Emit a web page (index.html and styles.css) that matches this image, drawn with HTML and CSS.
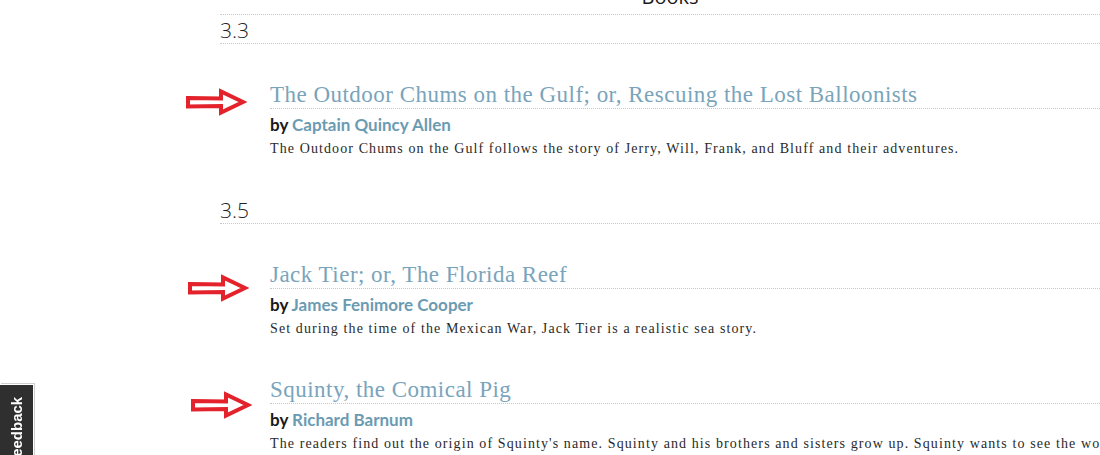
FILE: index.html
```html
<!DOCTYPE html>
<html lang="en">
<head>
<meta charset="utf-8">
<title>Books</title>
<link rel="stylesheet" href="styles.css">
</head>
<body>
<div class="main">
  <div class="page-title"><span>Books</span></div>

  <h2 class="section">3.3</h2>
  <div class="entry">
    <svg class="arrow arrow-a" width="62" height="28" viewBox="0 0 62 28"><path d="M3 10 L36 10.5 L36 3.5 L58 14 L36 24.5 L36 18 L3 18.5 Z" fill="#fff" stroke="#e3222b" stroke-width="4" stroke-linejoin="miter"/></svg>
    <h3 class="title">The Outdoor Chums on the Gulf; or, Rescuing the Lost Balloonists</h3>
    <div class="author">by <span class="name">Captain Quincy Allen</span></div>
    <p class="desc">The Outdoor Chums on the Gulf follows the story of Jerry, Will, Frank, and Bluff and their adventures.</p>
  </div>

  <h2 class="section">3.5</h2>
  <div class="entry">
    <svg class="arrow arrow-b" width="62" height="28" viewBox="0 0 62 28"><path d="M3 10 L36 10.5 L36 3.5 L58 14 L36 24.5 L36 18 L3 18.5 Z" fill="#fff" stroke="#e3222b" stroke-width="4" stroke-linejoin="miter"/></svg>
    <h3 class="title">Jack Tier; or, The Florida Reef</h3>
    <div class="author">by <span class="name">James Fenimore Cooper</span></div>
    <p class="desc">Set during the time of the Mexican War, Jack Tier is a realistic sea story.</p>
  </div>
  <div class="entry">
    <svg class="arrow arrow-c" width="62" height="28" viewBox="0 0 62 28"><path d="M3 10 L36 10.5 L36 3.5 L58 14 L36 24.5 L36 18 L3 18.5 Z" fill="#fff" stroke="#e3222b" stroke-width="4" stroke-linejoin="miter"/></svg>
    <h3 class="title">Squinty, the Comical Pig</h3>
    <div class="author">by <span class="name">Richard Barnum</span></div>
    <p class="desc">The readers find out the origin of Squinty's name. Squinty and his brothers and sisters grow up. Squinty wants to see the world.</p>
  </div>
</div>

<div class="feedback"><span>Feedback</span></div>
</body>
</html>
```

FILE: styles.css
```css
html, body {
  margin: 0;
  padding: 0;
  overflow: hidden;
  background: #fff;
}

body {
  width: 1100px;
  height: 455px;
  font-family: "Open Sans", "Liberation Sans", sans-serif;
  color: #222;
}

.main {
  margin-left: 220px;
  width: 900px;
}

.page-title {
  height: 14px;
  border-bottom: 1px dotted #c8c8c8;
  display: flex;
  justify-content: center;
}

.page-title span {
  margin-top: -13px;
  font-size: 20px;
  line-height: 20px;
  height: 20px;
  font-weight: 400;
  color: #1a1a1a;
}

.section {
  margin: 0 0 36px 0;
  height: 28px;
  font-family: "Open Sans", "Liberation Sans", sans-serif;
  font-weight: 300;
  font-size: 21px;
  line-height: 30px;
  color: #222;
  border-bottom: 1px dotted #c8c8c8;
  box-sizing: content-box;
}

.entry {
  position: relative;
  margin-left: 50px;
  height: 115px;
}

.arrow {
  position: absolute;
}

.arrow-a {
  left: -85px;
  top: 8px;
}

.arrow-b {
  left: -83px;
  top: 14px;
}

.arrow-c {
  left: -80px;
  top: 16px;
}

.title {
  margin: 0;
  height: 28px;
  font-family: "Liberation Serif", "DejaVu Serif", serif;
  font-weight: 400;
  font-size: 23px;
  line-height: 30px;
  letter-spacing: 0.48px;
  color: #79a4bb;
  border-bottom: 1px dotted #c8c8c8;
  white-space: nowrap;
}

.author {
  margin-top: 5px;
  font-family: Lato, "Open Sans", sans-serif;
  font-weight: 700;
  font-size: 17px;
  line-height: 22px;
  color: #1a1a1a;
}

.author .name {
  color: #6b9bb2;
}

.desc {
  margin: 3px 0 0 0;
  font-family: "Liberation Serif", "DejaVu Serif", serif;
  font-size: 14px;
  line-height: 20px;
  letter-spacing: 1.1px;
  color: #2a2a2a;
  white-space: nowrap;
}

.feedback {
  position: fixed;
  left: 0;
  top: 384px;
  width: 34px;
  height: 100px;
  background: #2f2f2f;
  border-top: 1px solid #fff;
  border-right: 1px solid #fff;
  box-shadow: 1px -1px 0 #cfcfcf;
  display: flex;
  justify-content: center;
  padding-top: 12px;
  box-sizing: border-box;
}

.feedback span {
  writing-mode: vertical-rl;
  transform: rotate(180deg);
  font-family: "Liberation Sans", Arial, sans-serif;
  font-weight: 700;
  font-size: 15px;
  line-height: 18px;
  color: #fff;
  height: 72px;
  text-align: right;
}
```
